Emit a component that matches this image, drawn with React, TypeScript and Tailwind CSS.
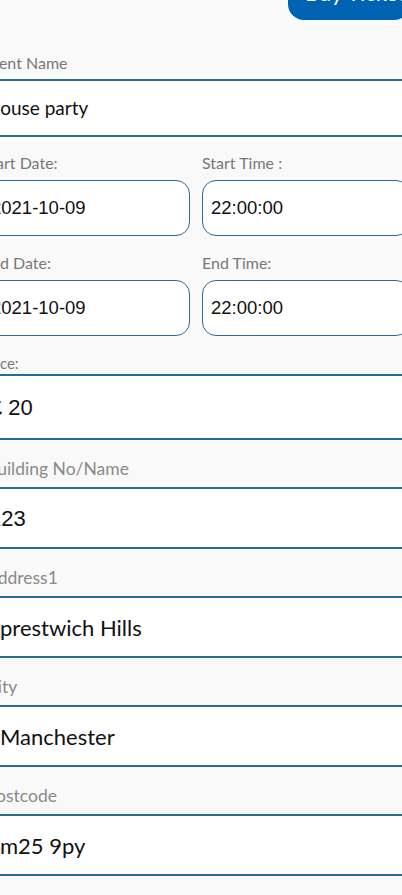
import React from "react";

const geo = "font-['Lato','Noto_Sans',sans-serif]";
const arial = "font-['Liberation_Sans',Arial,sans-serif]";

const addressFields = [
  { label: "Building No/Name", value: "123", valueClass: `pl-[7px] ${arial}` },
  { label: "Address1", value: "prestwich Hills", valueClass: `pl-[18px] ${geo}` },
  { label: "City", value: "Manchester", valueClass: `pl-[18px] ${geo}` },
  { label: "Postcode", value: "m25 9py", valueClass: `pl-[18px] ${geo}` },
];

function BoxField({ label, value }: { label: string; value: string }) {
  return (
    <div>
      <div className={`h-[20px] text-[16px] leading-[20px] text-[#787878] ${geo}`}>{label}</div>
      <div
        className={`mt-[7px] h-[56px] rounded-[14px] border-[1.5px] border-[#2b6b93] bg-white flex items-center pl-[8px] text-[18.5px] text-[#111] ${arial}`}
      >
        {value}
      </div>
    </div>
  );
}

export default function App() {
  return (
    <div className="w-[402px] h-[895px] overflow-hidden bg-[#f9f9f9]">
      <div className="-ml-[18px] w-[428px]">
        {/* Buy ticket */}
        <div className="flex justify-end -mt-[24px]">
          <div
            className={`h-[44px] w-[122px] rounded-[16px] bg-[#0063b1] text-white text-[22px] leading-[22px] flex items-center pl-[17px] pb-[10px] ${geo}`}
          >
            Buy Ticket
          </div>
        </div>

        {/* Event name */}
        <div className={`mt-[33px] h-[20px] text-[16px] leading-[20px] text-[#787878] ${geo}`}>
          Event Name
        </div>
        <div
          className={`mt-[6px] h-[58px] border-y-2 border-[#2b6b93] bg-white flex items-center pl-[4px] text-[19px] text-[#111] ${geo}`}
        >
          House party
        </div>

        {/* Dates */}
        <div className="mt-[16px] grid grid-cols-2 gap-x-[12px]">
          <BoxField label="Start Date:" value="2021-10-09" />
          <BoxField label="Start Time :" value="22:00:00" />
        </div>
        <div className="mt-[17px] grid grid-cols-2 gap-x-[12px]">
          <BoxField label="End Date:" value="2021-10-09" />
          <BoxField label="End Time:" value="22:00:00" />
        </div>

        {/* Price */}
        <div className={`mt-[18px] h-[18px] text-[15px] leading-[18px] text-[#787878] ${geo}`}>
          Price:
        </div>
        <div
          className={`mt-[2px] h-[66px] border-y-2 border-[#2b6b93] bg-white flex items-center pl-[8px] text-[22px] text-[#111] ${arial}`}
        >
          £ 20
        </div>

        {/* Address */}
        {addressFields.map((f) => (
          <div key={f.label}>
            <div
              className={`h-[47px] flex items-end pb-[6px] pl-[4px] text-[17.5px] leading-[24px] text-[#8a8a8a] ${geo}`}
            >
              {f.label}
            </div>
            <div
              className={`h-[62px] border-y-2 border-[#2b6b93] bg-white flex items-center text-[22px] text-[#111] ${f.valueClass}`}
            >
              {f.value}
            </div>
          </div>
        ))}
      </div>
    </div>
  );
}
